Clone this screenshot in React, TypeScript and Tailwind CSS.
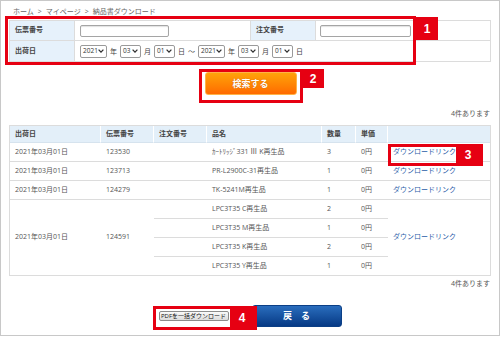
import React from "react";

const FONT = { fontFamily: '"Open Sans", "Noto Sans CJK JP", sans-serif' };

function Sel({ v, w }: { v: string; w: string }) {
  return (
    <div className={`${w} h-[13px] border border-[#9a9a9a] rounded-[2px] bg-white flex items-center justify-between pl-[2px] pr-[2px] shrink-0`}>
      <span className="text-[6.5px] leading-none text-[#333]">{v}</span>
      <svg width="6" height="4" viewBox="0 0 6 4">
        <path d="M0.6 0.6 L3 3.1 L5.4 0.6" fill="none" stroke="#333" strokeWidth="1.3" />
      </svg>
    </div>
  );
}

function Ch({ c }: { c: string }) {
  return <span className="text-[7px] leading-none text-[#444] w-[7px] shrink-0 text-center">{c}</span>;
}

type Row = { d: string; no: string; name: string; q: string };

export default function App() {
  const rows: Row[] = [
    { d: "2021年03月01日", no: "123530", name: "ｶｰﾄﾘｯｼﾞ331 Ⅲ K再生品", q: "3" },
    { d: "2021年03月01日", no: "123713", name: "PR-L2900C-31再生品", q: "1" },
    { d: "2021年03月01日", no: "124279", name: "TK-5241M再生品", q: "1" },
  ];
  const sub = [
    { name: "LPC3T35 C再生品", q: "2" },
    { name: "LPC3T35 M再生品", q: "1" },
    { name: "LPC3T35 K再生品", q: "2" },
    { name: "LPC3T35 Y再生品", q: "1" },
  ];
  const cell = "pl-[5px] flex items-center text-[7px] text-[#555] border-b border-[#dcdcdc] whitespace-nowrap";
  const head = "pl-[5px] flex items-center text-[7px] font-bold text-[#444] bg-[#e3eff9] border-b border-[#d6e3ee]";
  const link = "text-[#2b5ca8]";
  const badgeFont = { fontFamily: '"Liberation Sans", Arial, sans-serif' };

  return (
    <div style={FONT} className="relative w-[500px] h-[336px] border border-[#c8c8c8] bg-white overflow-hidden">
      {/* breadcrumb */}
      <div className="h-[19px] pt-[3px] pl-[12px] text-[7px] leading-[16px] text-[#666] flex">
        <span>ホーム</span>
        <span className="mx-[4px]">&gt;</span>
        <span>マイページ</span>
        <span className="mx-[4px]">&gt;</span>
        <span>納品書ダウンロード</span>
      </div>

      {/* search form */}
      <div className="ml-[8px] w-[482px] border border-[#dcdcdc]">
        <div className="flex h-[20px] border-b border-[#dcdcdc]">
          <div className="w-[65px] bg-[#e6f1fb] border-r border-[#dcdcdc] pl-[5px] flex items-center text-[7px] font-bold text-[#444]">
            伝票番号
          </div>
          <div className="w-[175px] pl-[5px] flex items-center">
            <div className="w-[89px] h-[12px] border border-[#a5a5a5] rounded-[2px] bg-white shadow-[inset_0_1px_1px_rgba(0,0,0,0.12)]" />
          </div>
          <div className="w-[66px] bg-[#e6f1fb] border-x border-[#dcdcdc] pl-[5px] flex items-center text-[7px] font-bold text-[#444]">
            注文番号
          </div>
          <div className="flex-1 pl-[4px] flex items-center">
            <div className="w-[91px] h-[12px] border border-[#a5a5a5] rounded-[2px] bg-white shadow-[inset_0_1px_1px_rgba(0,0,0,0.12)]" />
          </div>
        </div>
        <div className="flex h-[20px]">
          <div className="w-[65px] bg-[#e6f1fb] border-r border-[#dcdcdc] pl-[5px] flex items-center text-[7px] font-bold text-[#444]">
            出荷日
          </div>
          <div className="flex-1 pl-[5px] flex items-center gap-[3px]">
            <Sel v="2021" w="w-[27px]" />
            <Ch c="年" />
            <Sel v="03" w="w-[21px]" />
            <Ch c="月" />
            <Sel v="01" w="w-[21px]" />
            <Ch c="日" />
            <Ch c="～" />
            <Sel v="2021" w="w-[27px]" />
            <Ch c="年" />
            <Sel v="03" w="w-[21px]" />
            <Ch c="月" />
            <Sel v="01" w="w-[21px]" />
            <Ch c="日" />
          </div>
        </div>
      </div>

      {/* search button */}
      <div className="mt-[10px] flex justify-center">
        <div className="ml-[1px] w-[92px] h-[23px] rounded-[3px] border border-[#ffb347] bg-gradient-to-b from-[#ffa20a] to-[#ff6a00] flex items-center justify-center text-[9px] font-bold text-white [text-shadow:0_0_1px_rgba(150,60,0,0.6)]">
          検索する
        </div>
      </div>

      <div className="h-[30px] pt-[14px] leading-[9px] text-right pr-[9px] text-[7px] text-[#555]">4件あります</div>

      {/* results table */}
      <div className="ml-[8px] w-[482px] border border-[#dcdcdc] grid grid-cols-[91px_53px_53px_115px_34px_32px_102px] grid-rows-[17px_19px_19px_19px_19px_19px_19px_18px]">
        <div className={`${head} border-r border-r-white`}>出荷日</div>
        <div className={`${head} border-r border-r-white`}>伝票番号</div>
        <div className={`${head} border-r border-r-white`}>注文番号</div>
        <div className={`${head} border-r border-r-white`}>品名</div>
        <div className={`${head} border-r border-r-white`}>数量</div>
        <div className={`${head} border-r border-r-white`}>単価</div>
        <div className={head}></div>

        {rows.map((r, i) => (
          <React.Fragment key={i}>
            <div className={cell}>{r.d}</div>
            <div className={cell}>{r.no}</div>
            <div className={cell}></div>
            <div className={cell}>{r.name}</div>
            <div className={cell}>{r.q}</div>
            <div className={cell}>0円</div>
            <div className={cell}>
              <span className={link}>ダウンロードリンク</span>
            </div>
          </React.Fragment>
        ))}

        {sub.map((s, i) => {
          const last = i === sub.length - 1;
          const c = last ? "pl-[5px] flex items-center text-[7px] text-[#555] whitespace-nowrap" : cell;
          return (
            <React.Fragment key={"s" + i}>
              {i === 0 && (
                <>
                  <div className="row-span-4 pl-[5px] flex items-center text-[7px] text-[#555]">2021年03月01日</div>
                  <div className="row-span-4 pl-[5px] flex items-center text-[7px] text-[#555]">124591</div>
                </>
              )}
              <div className={c}></div>
              <div className={c}>{s.name}</div>
              <div className={c}>{s.q}</div>
              <div className={c}>0円</div>
              {i === 0 && (
                <div className="row-span-4 pl-[5px] flex items-center text-[7px]">
                  <span className={link}>ダウンロードリンク</span>
                </div>
              )}
            </React.Fragment>
          );
        })}
      </div>

      <div className="h-[16px] leading-[16px] text-right pr-[9px] text-[7px] text-[#555]">4件あります</div>

      {/* bottom buttons */}
      <div className="mt-[13px] flex justify-center items-center gap-[23px]">
        <div className="w-[70px] h-[10px] border border-[#8c8c8c] rounded-[2px] bg-gradient-to-b from-[#fafafa] to-[#dcdcdc] flex items-center justify-center text-[6px] leading-none text-[#111] whitespace-nowrap overflow-hidden">
          PDFを一括ダウンロード
        </div>
        <div className="w-[90px] h-[22px] rounded-[3px] border border-[#0b3f86] bg-gradient-to-b from-[#2a6dbd] to-[#063a85] flex items-center justify-center text-[9px] font-bold text-white">
          戻　る
        </div>
      </div>

      {/* annotations */}
      <div className="absolute left-[4px] top-[15px] w-[411px] h-[49px] border-[3px] border-[#e60012]" />
      <div className="absolute left-[415px] top-[16px] w-[22px] h-[23px] bg-[#e60012] flex items-center justify-center text-white text-[12px] font-bold" style={badgeFont}>1</div>

      <div className="absolute left-[198px] top-[68px] w-[104px] h-[34px] border-[3px] border-[#e60012]" />
      <div className="absolute left-[301px] top-[68px] w-[22px] h-[19px] bg-[#e60012] flex items-center justify-center text-white text-[12px] font-bold" style={badgeFont}>2</div>

      <div className="absolute left-[387px] top-[143px] w-[95px] h-[22px] border-[3px] border-[#e60012] flex justify-end">
        <div className="w-[24px] h-full bg-[#e60012] flex items-center justify-center text-white text-[12px] font-bold" style={badgeFont}>3</div>
      </div>

      <div className="absolute left-[152px] top-[305px] w-[104px] h-[24px] border-[3px] border-[#e60012] flex justify-end">
        <div className="w-[24px] h-full bg-[#e60012] flex items-center justify-center text-white text-[12px] font-bold" style={badgeFont}>4</div>
      </div>
    </div>
  );
}
